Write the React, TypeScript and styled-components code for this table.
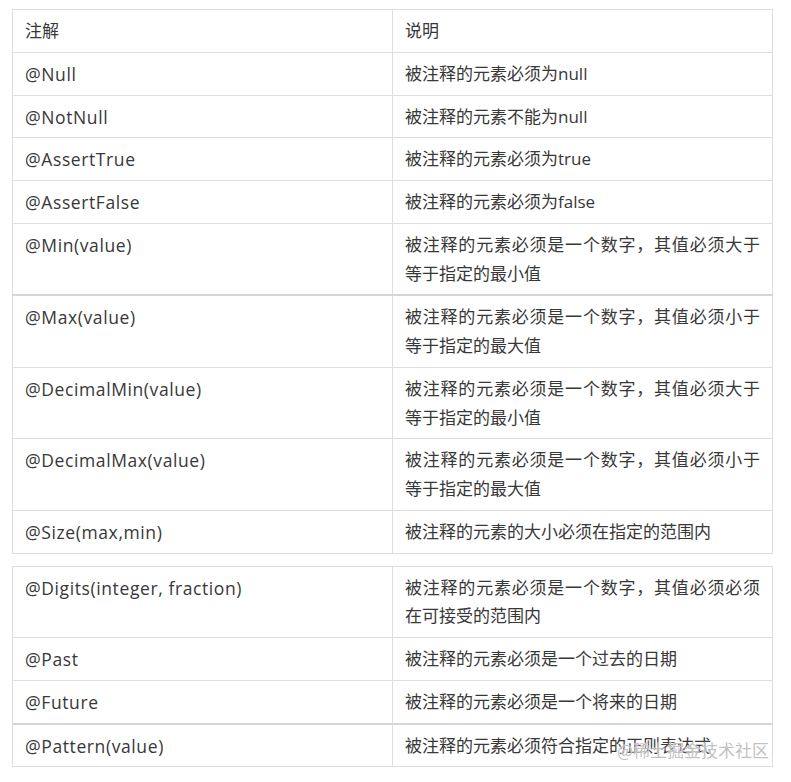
import React from 'react';
import styled, { createGlobalStyle } from 'styled-components';

const Global = createGlobalStyle`
  html, body { margin: 0; padding: 0; background: #ffffff; }
  body { font-family: "Open Sans", "Noto Sans CJK SC", sans-serif; }
`;

const Page = styled.div`
  position: relative;
  width: 791px;
  height: 782px;
  box-sizing: border-box;
  padding: 9px 0 0 12px;
  display: flex;
  flex-direction: column;
  gap: 12px;
  overflow: hidden;
`;

const Table = styled.table`
  width: 761px;
  border-collapse: collapse;
  table-layout: fixed;
  font-size: 17px;
  color: #383838;
`;

const Col = styled.col<{ $w?: number }>`
  width: ${(p) => (p.$w ? `${p.$w}px` : 'auto')};
`;

const Row = styled.tr<{ $seam?: boolean }>`
  & > td {
    border-top: ${(p) => (p.$seam ? '2px solid #d6d6d6' : '1px solid #dedede')};
  }
`;

const Cell = styled.td<{ $code?: boolean }>`
  border: 1px solid #dedede;
  padding: 7px 12px 6px;
  line-height: 28.75px;
  text-align: justify;
  vertical-align: top;
  word-break: break-all;
  font-size: ${(p) => (p.$code ? '17.5px' : '17px')};
  letter-spacing: ${(p) => (p.$code ? '0.6px' : '0')};
`;

const Watermark = styled.div`
  position: absolute;
  right: 22px;
  bottom: 20px;
  font-family: "Noto Sans CJK SC", sans-serif;
  font-size: 17px;
  color: rgba(140, 140, 140, 0.55);
  text-shadow: 0 0 1px #fff, 0 0 2px #fff;
`;

type Item = { k: string; v: string; seam?: boolean };

const first: Item[] = [
  { k: '@Null', v: '被注释的元素必须为null' },
  { k: '@NotNull', v: '被注释的元素不能为null' },
  { k: '@AssertTrue', v: '被注释的元素必须为true' },
  { k: '@AssertFalse', v: '被注释的元素必须为false' },
  { k: '@Min(value)', v: '被注释的元素必须是一个数字，其值必须大于等于指定的最小值' },
  { k: '@Max(value)', v: '被注释的元素必须是一个数字，其值必须小于等于指定的最大值', seam: true },
  { k: '@DecimalMin(value)', v: '被注释的元素必须是一个数字，其值必须大于等于指定的最小值' },
  { k: '@DecimalMax(value)', v: '被注释的元素必须是一个数字，其值必须小于等于指定的最大值' },
  { k: '@Size(max,min)', v: '被注释的元素的大小必须在指定的范围内' },
];

const second: Item[] = [
  { k: '@Digits(integer, fraction)', v: '被注释的元素必须是一个数字，其值必须必须在可接受的范围内' },
  { k: '@Past', v: '被注释的元素必须是一个过去的日期' },
  { k: '@Future', v: '被注释的元素必须是一个将来的日期' },
  { k: '@Pattern(value)', v: '被注释的元素必须符合指定的正则表达式', seam: true },
];

const Rows = ({ items }: { items: Item[] }) => (
  <>
    {items.map((it) => (
      <Row key={it.k} $seam={it.seam}>
        <Cell $code>{it.k}</Cell>
        <Cell>{it.v}</Cell>
      </Row>
    ))}
  </>
);

export default function App() {
  return (
    <>
      <Global />
      <Page>
        <Table>
          <colgroup>
            <Col $w={380} />
            <Col />
          </colgroup>
          <tbody>
            <Row>
              <Cell>注解</Cell>
              <Cell>说明</Cell>
            </Row>
            <Rows items={first} />
          </tbody>
        </Table>
        <Table>
          <colgroup>
            <Col $w={380} />
            <Col />
          </colgroup>
          <tbody>
            <Rows items={second} />
          </tbody>
        </Table>
        <Watermark>@稀土掘金技术社区</Watermark>
      </Page>
    </>
  );
}
